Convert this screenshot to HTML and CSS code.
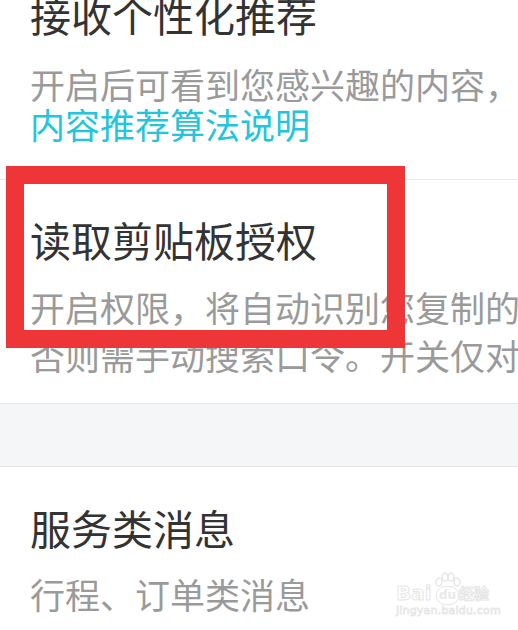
FILE: index.html
```html
<!DOCTYPE html>
<html lang="zh-CN">
<head>
<meta charset="utf-8">
<link rel="stylesheet" href="styles.css">
</head>
<body>
<div class="page">
  <section class="item item-first">
    <div class="title">接收个性化推荐</div>
    <div class="desc desc-tight">
      <div class="line">开启后可看到您感兴趣的内容，关闭后将展示通用内容</div>
      <div class="line link">内容推荐算法说明</div>
    </div>
  </section>
  <section class="item item-second">
    <div class="title">读取剪贴板授权</div>
    <div class="desc desc-loose">
      <div class="line">开启权限，将自动识别您复制的口令，</div>
      <div class="line">否则需手动搜索口令。开关仅对本机生效</div>
    </div>
  </section>
  <div class="band"></div>
  <section class="item item-third">
    <div class="title">服务类消息</div>
    <div class="desc desc-tight">
      <div class="line">行程、订单类消息</div>
    </div>
  </section>
</div>
<div class="highlight"></div>
<div class="watermark">
  <div class="wm-logo">
    <span class="wm-bai">Bai</span>
    <span class="wm-du">du</span>
    <span class="wm-jy">经验</span>
    <svg class="wm-paw" viewBox="0 0 30 20" width="30" height="20">
      <g fill="none" stroke="#e6e6e6" stroke-width="1.4">
        <ellipse cx="7" cy="10" rx="3" ry="4"/>
        <ellipse cx="13" cy="5" rx="3" ry="4"/>
        <ellipse cx="19" cy="5" rx="3" ry="4"/>
        <ellipse cx="25" cy="10" rx="3" ry="4"/>
      </g>
    </svg>
  </div>
  <div class="wm-url">jingyan.baidu.com</div>
</div>
</body>
</html>
```
FILE: styles.css
```css
html, body {
  margin: 0;
  padding: 0;
  background: #ffffff;
  width: 518px;
  height: 630px;
  overflow: hidden;
  font-family: "Noto Sans CJK SC", "Noto Sans", sans-serif;
}

.page {
  position: relative;
  margin-top: -10px;
}

.item {
  padding-left: 30px;
  background: #ffffff;
}

.title {
  font-size: 41px;
  line-height: 48px;
  color: #333333;
  white-space: nowrap;
}

.desc {
  font-size: 35px;
  color: #9a9a9a;
  white-space: nowrap;
  overflow: hidden;
}

.desc-tight .line {
  line-height: 40px;
}

.desc-loose .line {
  line-height: 48px;
}

.link {
  color: #22c5db;
}

.item-first {
  padding-bottom: 35px;
  border-bottom: 1px solid #e6e6e6;
}

.item-first .desc {
  margin-top: 26px;
}

.item-second {
  padding-top: 35px;
  padding-bottom: 24px;
  border-bottom: 1px solid #e3e5e6;
}

.item-second .desc {
  margin-top: 20px;
}

.band {
  height: 62px;
  background: #f4f6f7;
  border-bottom: 1px solid #e3e5e6;
}

.item-third {
  padding-top: 36px;
}

.item-third .desc {
  margin-top: 23px;
}

.highlight {
  position: absolute;
  left: 6px;
  top: 166px;
  width: 363px;
  height: 146px;
  border: 18px solid #ee3538;
}

.watermark {
  position: absolute;
  left: 396px;
  top: 574px;
  width: 100px;
  font-family: "DejaVu Sans", sans-serif;
  color: #f0f0f0;
}

.wm-logo {
  position: relative;
  height: 30px;
}

.wm-bai {
  position: absolute;
  left: 0;
  top: 8px;
  font-size: 20px;
  font-weight: bold;
  line-height: 22px;
  color: #ffffff;
  -webkit-text-stroke: 1px #e6e6e6;
}

.wm-du {
  position: absolute;
  left: 40px;
  top: 12px;
  width: 21px;
  height: 17px;
  border: 1.5px solid #e6e6e6;
  border-radius: 9px;
  font-size: 12px;
  font-weight: bold;
  line-height: 17px;
  text-align: center;
  color: #e8e8e8;
}

.wm-jy {
  position: absolute;
  left: 63px;
  top: 9px;
  font-family: "Noto Sans CJK SC", sans-serif;
  font-size: 15px;
  font-weight: bold;
  line-height: 20px;
  color: #ffffff;
  -webkit-text-stroke: 1px #e6e6e6;
}

.wm-paw {
  position: absolute;
  left: 36px;
  top: -2px;
}

.wm-url {
  font-size: 11px;
  line-height: 14px;
  color: #ffffff;
  -webkit-text-stroke: 0.8px #e6e6e6;
  letter-spacing: 0.2px;
}
```
